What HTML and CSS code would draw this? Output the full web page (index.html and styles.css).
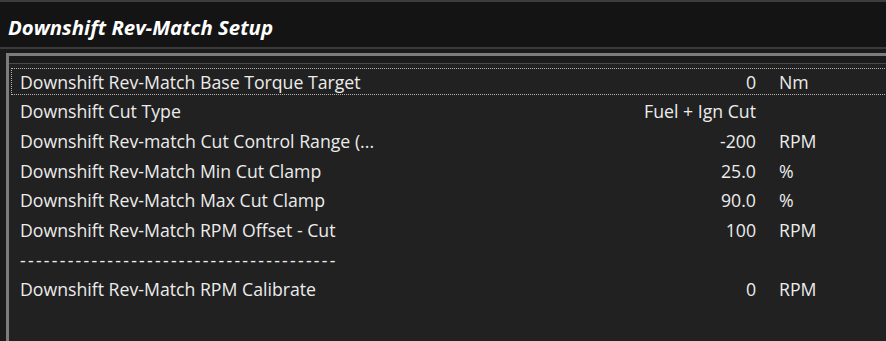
FILE: index.html
```html
<!DOCTYPE html>
<html>
<head>
<meta charset="utf-8">
<link rel="stylesheet" href="styles.css">
</head>
<body>
<div class="app">
  <div class="topline"></div>
  <div class="title">Downshift Rev-Match Setup</div>
  <div class="sep"></div>
  <div class="frame">
    <div class="panel">
      <div class="row focus"><span class="label">Downshift Rev-Match Base Torque Target</span><span class="value">0</span><span class="unit">Nm</span></div>
      <div class="row"><span class="label">Downshift Cut Type</span><span class="value">Fuel + Ign Cut</span><span class="unit"></span></div>
      <div class="row"><span class="label">Downshift Rev-match Cut Control Range (...</span><span class="value">-200</span><span class="unit">RPM</span></div>
      <div class="row"><span class="label">Downshift Rev-Match Min Cut Clamp</span><span class="value">25.0</span><span class="unit">%</span></div>
      <div class="row"><span class="label">Downshift Rev-Match Max Cut Clamp</span><span class="value">90.0</span><span class="unit">%</span></div>
      <div class="row"><span class="label">Downshift Rev-Match RPM Offset - Cut</span><span class="value">100</span><span class="unit">RPM</span></div>
      <div class="row"><span class="label dashes">----------------------------------------</span><span class="value"></span><span class="unit"></span></div>
      <div class="row"><span class="label">Downshift Rev-Match RPM Calibrate</span><span class="value">0</span><span class="unit">RPM</span></div>
    </div>
  </div>
</div>
</body>
</html>
```
FILE: styles.css
```css
html, body {
  margin: 0;
  padding: 0;
  background: #1b1b1b;
}
.app {
  width: 886px;
  height: 341px;
  overflow: hidden;
  display: flex;
  flex-direction: column;
  font-family: "Open Sans", "Noto Sans", sans-serif;
  color: #ececec;
}
.topline {
  height: 2px;
  background: #3d3d3d;
}
.title {
  height: 40px;
  line-height: 40px;
  padding-top: 5px;
  background: #141414;
  padding-left: 8px;
  font-size: 20.4px;
  font-weight: 700;
  font-style: italic;
  color: #ffffff;
}
.sep {
  height: 2px;
  background: #3a3a3a;
  margin-bottom: 4px;
}
.frame {
  flex: 1;
  margin-left: 6px;
  border-top: 3px solid #7d7d7d;
  border-left: 3px solid #7d7d7d;
  padding-top: 7px;
  display: flex;
  flex-direction: column;
}
.panel {
  flex: 1;
  background: #212121;
  border-top: 1px solid #4a4a4a;
  padding-top: 4px;
  overflow: hidden;
}
.row {
  box-sizing: border-box;
  width: 900px;
  height: 27px;
  margin: 0 0 2.7px 2px;
  border: 1px dotted transparent;
  padding-left: 8px;
  display: grid;
  grid-template-columns: 577px 136px 130px;
  column-gap: 23px;
  align-items: center;
  font-size: 17.7px;
  white-space: nowrap;
}
.row.focus {
  border-color: #b4b4b4;
}
.value {
  text-align: right;
}
.dashes {
  letter-spacing: 2.25px;
}
```
